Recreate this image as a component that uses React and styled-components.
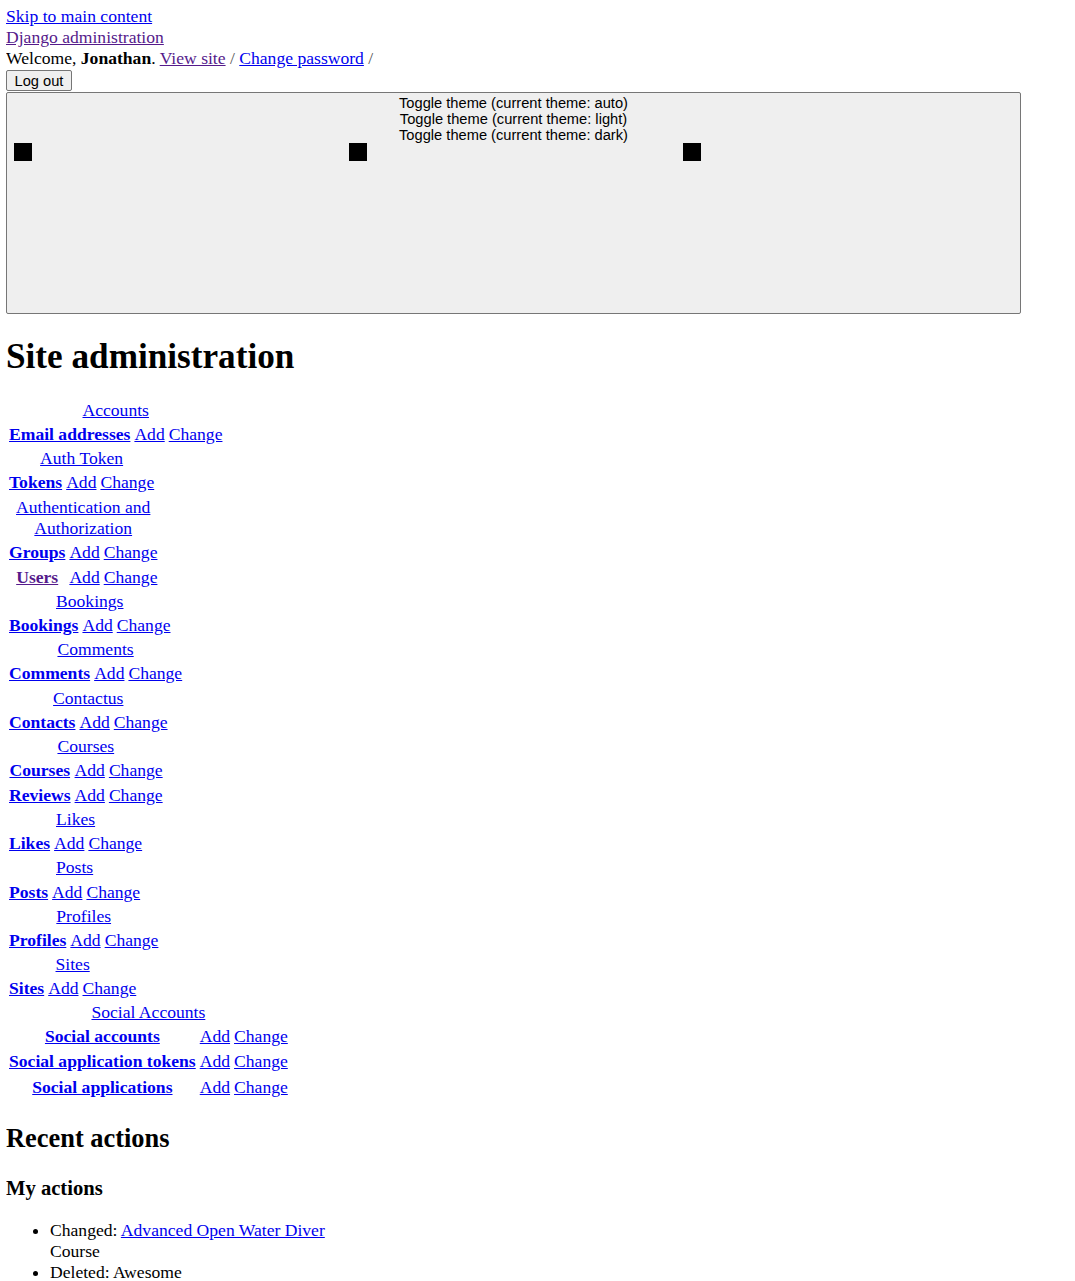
import React from "react";
import styled, { createGlobalStyle } from "styled-components";

const GlobalStyle = createGlobalStyle`
  html, body { background: #ffffff; }
  body {
    margin: 6px;
    font-family: "Liberation Serif", "Times New Roman", serif;
    font-size: 17.6px;
    line-height: 21px;
    color: #000000;
  }
`;

const Link = styled.a`
  color: ${(p) => (p.$visited ? "#551a8b" : "#0000ee")};
  text-decoration: underline;
  cursor: pointer;
`;

const Line = styled.div`
  display: block;
`;

const Sep = styled.span`
  color: #555555;
`;

const LogoutForm = styled.form`
  display: block;
  margin: 0;
  padding: 1px 0;
`;

const NativeButton = styled.button`
  font-family: "Liberation Sans", Arial, sans-serif;
  font-size: 14.67px;
  line-height: 16px;
  color: #000000;
  background: #efefef;
  border: 1px solid #767676;
  border-radius: 2px;
  box-sizing: border-box;
`;

const LogoutButton = styled(NativeButton)`
  display: block;
  height: 21px;
  padding: 1px 7.5px;
`;

const ThemeToggle = styled(NativeButton)`
  display: flex;
  flex-direction: column;
  align-items: center;
  padding: 2px 7px;
`;

const ToggleLabel = styled.div`
  text-align: center;
  white-space: nowrap;
`;

const IconRow = styled.div`
  display: flex;
  gap: 4.5px;
  height: 168px;
`;

const IconBox = styled.svg`
  width: 330px;
  height: 165px;
  display: block;
`;

const Heading1 = styled.h1`
  font-size: 35.2px;
  line-height: 42px;
  font-weight: bold;
  margin: 22px 0;
`;

const AppList = styled.div`
  display: block;
`;

const AppTable = styled.table`
  border-collapse: separate;
  border-spacing: 2px;
  font-size: 17.6px;
  line-height: 21.12px;
`;

const Caption = styled.caption`
  text-align: center;
  caption-side: top;
`;

const RowHead = styled.th`
  font-weight: bold;
  text-align: center;
  padding: 1px;
`;

const Cell = styled.td`
  padding: 1px;
`;

const Heading2 = styled.h2`
  font-size: 26.4px;
  line-height: 31.7px;
  font-weight: bold;
  margin: 21.9px 0;
`;

const Heading3 = styled.h3`
  font-size: 20.6px;
  line-height: 24.7px;
  font-weight: bold;
  margin: 20.6px 0 19.6px;
`;

const ActionList = styled.ul`
  list-style: disc;
  margin: 17px 0;
  padding-left: 44px;
`;

const ActionItem = styled.li`
  line-height: 21px;
`;

const apps = [
  { name: "Accounts", models: [{ name: "Email addresses" }] },
  { name: "Auth Token", models: [{ name: "Tokens" }] },
  {
    name: "Authentication and Authorization",
    models: [{ name: "Groups" }, { name: "Users", visited: true }],
  },
  { name: "Bookings", models: [{ name: "Bookings" }] },
  { name: "Comments", models: [{ name: "Comments" }] },
  { name: "Contactus", models: [{ name: "Contacts" }] },
  { name: "Courses", models: [{ name: "Courses" }, { name: "Reviews" }] },
  { name: "Likes", models: [{ name: "Likes" }] },
  { name: "Posts", models: [{ name: "Posts" }] },
  { name: "Profiles", models: [{ name: "Profiles" }] },
  { name: "Sites", models: [{ name: "Sites" }] },
  {
    name: "Social Accounts",
    models: [
      { name: "Social accounts" },
      { name: "Social application tokens" },
      { name: "Social applications" },
    ],
  },
];

function ThemeIcon() {
  return (
    <IconBox viewBox="0 0 330 165" aria-hidden="true">
      <rect x="0" y="0" width="18" height="18" fill="#000000" />
    </IconBox>
  );
}

export default function App() {
  return (
    <>
      <GlobalStyle />
      <Line>
        <Link>Skip to main content</Link>
      </Line>
      <Line>
        <Link $visited>Django administration</Link>
      </Line>
      <Line>
        Welcome, <strong>Jonathan</strong>. <Link $visited>View site</Link>{" "}
        <Sep>/</Sep> <Link>Change password</Link> <Sep>/</Sep>
      </Line>
      <LogoutForm>
        <LogoutButton type="button">Log out</LogoutButton>
      </LogoutForm>
      <ThemeToggle type="button">
        <ToggleLabel>Toggle theme (current theme: auto)</ToggleLabel>
        <ToggleLabel>Toggle theme (current theme: light)</ToggleLabel>
        <ToggleLabel>Toggle theme (current theme: dark)</ToggleLabel>
        <IconRow>
          <ThemeIcon />
          <ThemeIcon />
          <ThemeIcon />
        </IconRow>
      </ThemeToggle>
      <Heading1>Site administration</Heading1>
      <AppList>
        {apps.map((app) => (
          <AppTable key={app.name}>
            <Caption>
              <Link>{app.name}</Link>
            </Caption>
            <tbody>
              {app.models.map((m) => (
                <tr key={m.name}>
                  <RowHead scope="row">
                    <Link $visited={m.visited}>{m.name}</Link>
                  </RowHead>
                  <Cell>
                    <Link>Add</Link>
                  </Cell>
                  <Cell>
                    <Link>Change</Link>
                  </Cell>
                </tr>
              ))}
            </tbody>
          </AppTable>
        ))}
      </AppList>
      <Heading2>Recent actions</Heading2>
      <Heading3>My actions</Heading3>
      <ActionList>
        <ActionItem>
          Changed: <Link>Advanced Open Water Diver</Link>
          <br />
          Course
        </ActionItem>
        <ActionItem>Deleted: Awesome</ActionItem>
      </ActionList>
    </>
  );
}
